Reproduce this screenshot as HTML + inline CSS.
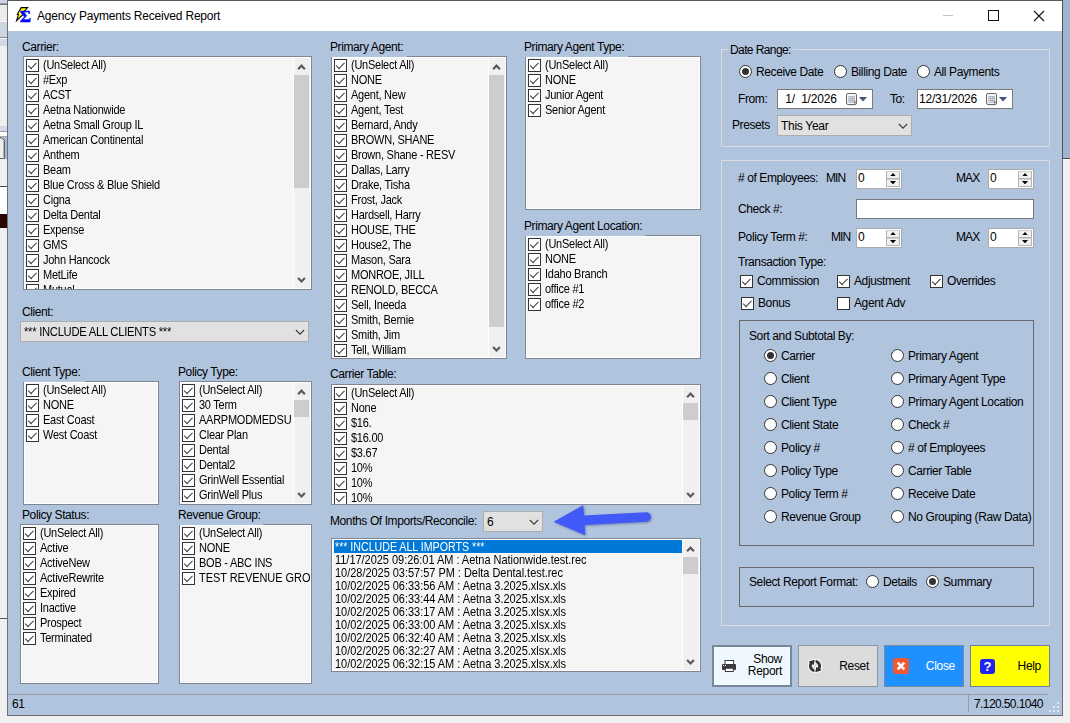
<!DOCTYPE html><html><head><meta charset="utf-8"><title>Agency Payments Received Report</title><style>
*{box-sizing:border-box}
html,body{margin:0;padding:0}
body{width:1070px;height:723px;position:relative;overflow:hidden;background:#f0f0f0;font-family:"Liberation Sans",sans-serif;font-size:12px;color:#000}
.a{position:absolute}
.win{position:absolute;left:7px;top:0;width:1056px;height:716px;background:#b0c4de;border:1px solid #6d7078;border-top-color:#585858}
.tb{position:absolute;left:0;top:0;width:1054px;height:30px;background:#fff}
.ttl{position:absolute;left:29px;top:8px;font-size:12px;line-height:14px;letter-spacing:-.2px;color:#000;white-space:nowrap}
.lb{position:absolute;font-size:12px;line-height:14px;letter-spacing:-.4px;white-space:nowrap;color:#000}
.list{position:absolute;background:#f5f5f5;border:1px solid #7f8794;box-shadow:inset 0 0 0 1px #fff;overflow:hidden}
.it{position:absolute;left:2px;height:15px;font-size:11px;line-height:15px;letter-spacing:-.25px;white-space:nowrap;padding-left:17px}
.t{display:inline-block;transform:scaleY(1.1);transform-origin:0 11.1px}
.t2{display:inline-block;transform:scaleY(1.1);transform-origin:0 10.1px}
.cb{position:absolute;width:13px;height:13px;border:1px solid #333;background:#fff}
.cb.on:before,.cb.on:after{content:"";position:absolute;height:1.4px;background:#3c3c3c;transform-origin:0 50%}
.cb.on:before{left:1.3px;top:4.7px;width:4.5px;transform:rotate(45deg)}
.cb.on:after{left:3.6px;top:7.8px;width:8.4px;transform:rotate(-45deg)}
.sb{position:absolute;width:17px;background:#f0f0f0;border-left:1px solid #fff}
.th{position:absolute;left:0px;width:15px;background:#cdcdcd}
.combo{position:absolute;background:#e1e1e1;border:1px solid #adadad;font-size:12px;line-height:21px;letter-spacing:-.3px;white-space:nowrap;padding-left:3px}
.rd{position:absolute;width:13px;height:13px;border:1px solid #333;border-radius:50%;background:#fff}
.rd.on:after{content:"";position:absolute;left:2px;top:2px;width:7px;height:7px;border-radius:50%;background:#333}
.gb{position:absolute;border:1px solid #dcdcdc}
.gd{position:absolute;border:1px solid #696969}
.num{position:absolute;width:46px;height:20px;background:#fff;border:1px solid #ababab;font-size:12px;line-height:16px;padding-left:1px}
.sp{position:absolute;left:29px;width:14px;height:8px;background:#f0f0f0;border:1px solid #b4b4b4;border-top-color:#d0d0d0}
.btn{position:absolute;top:644px;height:42px;font-size:12px;letter-spacing:-.3px}
</style></head><body>
<div class="a" style="left:0;top:0px;width:7px;height:4px;background:#cbd5e3"></div>
<div class="a" style="left:0;top:3px;width:7px;height:1px;background:#9a9a9a"></div>
<div class="a" style="left:0;top:4px;width:7px;height:1px;background:#777"></div>
<div class="a" style="left:0;top:5px;width:7px;height:16px;background:#ececec"></div>
<div class="a" style="left:0;top:21px;width:7px;height:1px;background:#f8f8f8"></div>
<div class="a" style="left:0;top:22px;width:7px;height:15px;background:#ccd5e3"></div>
<div class="a" style="left:0;top:37px;width:7px;height:1px;background:#888"></div>
<div class="a" style="left:0;top:38px;width:7px;height:1px;background:#fafafa"></div>
<div class="a" style="left:0;top:39px;width:7px;height:7px;background:#cfd9e7"></div>
<div class="a" style="left:0;top:126px;width:7px;height:5px;background:#d0dae8"></div>
<div class="a" style="left:0;top:131px;width:7px;height:1px;background:#a0a0a0"></div>
<div class="a" style="left:0;top:132px;width:7px;height:4px;background:#fff"></div>
<div class="a" style="left:0;top:136px;width:7px;height:1px;background:#b0b0b0"></div>
<div class="a" style="left:0;top:137px;width:7px;height:22px;background:#a5b8d6"></div>
<div class="a" style="left:0;top:186px;width:7px;height:1px;background:#444"></div>
<div class="a" style="left:0;top:187px;width:7px;height:27px;background:#fff"></div>
<div class="a" style="left:0;top:214px;width:7px;height:14px;background:#2b0404"></div>
<div class="a" style="left:0;top:618px;width:7px;height:1px;background:#555"></div>
<svg class="a" style="left:0;top:137px" width="7" height="22" viewBox="0 0 7 22"><path d="M0 0.5 L1.5 0.5 L4.5 3.5 L4.5 21.5 L0 21.5" fill="#f0f0f0" stroke="#666" stroke-width="1"/><path d="M0 1.6 L1.2 1.6 L3.5 4 L3.5 20.5" fill="none" stroke="#b5b5b5" stroke-width="1"/></svg>
<div class="a" style="left:1063px;top:0;width:7px;height:158px;background:#a2b3cf"></div>
<div class="a" style="left:1063px;top:158px;width:7px;height:1px;background:#4a4a4a"></div>
<div class="a" style="left:1063px;top:159px;width:7px;height:1px;background:#fff"></div>
<div class="a" style="left:1062px;top:0;width:1px;height:159px;background:#4a525e;z-index:5"></div>
<div class="win">
<div class="tb"></div>
<svg class="a" style="left:6px;top:3px" width="24" height="22" viewBox="0 0 24 22"><path d="M7.2 3.6 L13.6 3.6 L9.6 8 L9 10.4 L2.6 16.6 L4.4 10.6 L3.4 10.4 L5.4 6.6 Z" fill="#ffff00" stroke="#000" stroke-width="1.1" stroke-linejoin="miter"/><text x="5.7" y="18.1" font-family="Liberation Serif,serif" font-weight="bold" font-size="17" stroke="#0000ff" stroke-width=".5" textLength="11.2" lengthAdjust="spacingAndGlyphs" fill="#0000ff">Σ</text></svg>
<div class="ttl">Agency Payments Received Report</div>
<div class="a" style="left:935px;top:14px;width:10px;height:1px;background:#c4c4c4"></div>
<div class="a" style="left:980px;top:9px;width:11px;height:11px;border:1px solid #111"></div>
<svg class="a" style="left:1025px;top:9px" width="12" height="12" viewBox="0 0 12 12"><path d="M1 1 L11 11 M11 1 L1 11" stroke="#111" stroke-width="1.1" fill="none"/></svg>
<div class="lb" style="left:14px;top:39px;">Carrier:</div>
<div class="list" style="left:15px;top:55px;width:289px;height:234px">
<div class="cb on" style="left:2px;top:2px"></div>
<div class="it" style="top:1px"><span class="t">(UnSelect All)</span></div>
<div class="cb on" style="left:2px;top:17px"></div>
<div class="it" style="top:16px"><span class="t">#Exp</span></div>
<div class="cb on" style="left:2px;top:32px"></div>
<div class="it" style="top:31px"><span class="t">ACST</span></div>
<div class="cb on" style="left:2px;top:47px"></div>
<div class="it" style="top:46px"><span class="t">Aetna Nationwide</span></div>
<div class="cb on" style="left:2px;top:62px"></div>
<div class="it" style="top:61px"><span class="t">Aetna Small Group IL</span></div>
<div class="cb on" style="left:2px;top:77px"></div>
<div class="it" style="top:76px"><span class="t">American Continental</span></div>
<div class="cb on" style="left:2px;top:92px"></div>
<div class="it" style="top:91px"><span class="t">Anthem</span></div>
<div class="cb on" style="left:2px;top:107px"></div>
<div class="it" style="top:106px"><span class="t">Beam</span></div>
<div class="cb on" style="left:2px;top:122px"></div>
<div class="it" style="top:121px"><span class="t">Blue Cross &amp; Blue Shield</span></div>
<div class="cb on" style="left:2px;top:137px"></div>
<div class="it" style="top:136px"><span class="t">Cigna</span></div>
<div class="cb on" style="left:2px;top:152px"></div>
<div class="it" style="top:151px"><span class="t">Delta Dental</span></div>
<div class="cb on" style="left:2px;top:167px"></div>
<div class="it" style="top:166px"><span class="t">Expense</span></div>
<div class="cb on" style="left:2px;top:182px"></div>
<div class="it" style="top:181px"><span class="t">GMS</span></div>
<div class="cb on" style="left:2px;top:197px"></div>
<div class="it" style="top:196px"><span class="t">John Hancock</span></div>
<div class="cb on" style="left:2px;top:212px"></div>
<div class="it" style="top:211px"><span class="t">MetLife</span></div>
<div class="cb on" style="left:2px;top:227px"></div>
<div class="it" style="top:226px"><span class="t">Mutual</span></div>
<div class="sb" style="left:269px;top:1px;height:230px">
<svg class="a" style="left:-1px;top:0" width="17" height="17"><path d="M5.1 11.2 L8.5 7.7 L11.9 11.2" fill="none" stroke="#5a5a5a" stroke-width="2.2"/></svg>
<svg class="a" style="left:-1px;top:213px" width="17" height="17"><path d="M5.1 7 L8.5 10.5 L11.9 7" fill="none" stroke="#5a5a5a" stroke-width="2.2"/></svg>
<div class="th" style="top:17px;height:113px"></div>
</div>
</div>
<div class="lb" style="left:14px;top:304px;">Client:</div>
<div class="combo" style="left:12px;top:320px;width:289px;height:21px"><span style="display:inline-block;transform:scaleX(.937);transform-origin:0 50%">*** INCLUDE ALL CLIENTS ***</span><svg class="a" style="right:2px;top:6px" width="12" height="8"><path d="M1.9 2 L6 6.1 L10.1 2" fill="none" stroke="#3c3c3c" stroke-width="1.15"/></svg></div>
<div class="lb" style="left:14px;top:364px;">Client Type:</div>
<div class="list" style="left:15px;top:380px;width:136px;height:124px">
<div class="cb on" style="left:2px;top:2px"></div>
<div class="it" style="top:1px"><span class="t">(UnSelect All)</span></div>
<div class="cb on" style="left:2px;top:17px"></div>
<div class="it" style="top:16px"><span class="t">NONE</span></div>
<div class="cb on" style="left:2px;top:32px"></div>
<div class="it" style="top:31px"><span class="t">East Coast</span></div>
<div class="cb on" style="left:2px;top:47px"></div>
<div class="it" style="top:46px"><span class="t">West Coast</span></div>
</div>
<div class="lb" style="left:170px;top:364px;">Policy Type:</div>
<div class="list" style="left:171px;top:380px;width:133px;height:124px">
<div class="cb on" style="left:2px;top:2px"></div>
<div class="it" style="top:1px"><span class="t">(UnSelect All)</span></div>
<div class="cb on" style="left:2px;top:17px"></div>
<div class="it" style="top:16px"><span class="t">30 Term</span></div>
<div class="cb on" style="left:2px;top:32px"></div>
<div class="it" style="top:31px"><span class="t">AARPMODMEDSU</span></div>
<div class="cb on" style="left:2px;top:47px"></div>
<div class="it" style="top:46px"><span class="t">Clear Plan</span></div>
<div class="cb on" style="left:2px;top:62px"></div>
<div class="it" style="top:61px"><span class="t">Dental</span></div>
<div class="cb on" style="left:2px;top:77px"></div>
<div class="it" style="top:76px"><span class="t">Dental2</span></div>
<div class="cb on" style="left:2px;top:92px"></div>
<div class="it" style="top:91px"><span class="t">GrinWell Essential</span></div>
<div class="cb on" style="left:2px;top:107px"></div>
<div class="it" style="top:106px"><span class="t">GrinWell Plus</span></div>
<div class="sb" style="left:113px;top:1px;height:120px">
<svg class="a" style="left:-1px;top:0" width="17" height="17"><path d="M5.1 11.2 L8.5 7.7 L11.9 11.2" fill="none" stroke="#5a5a5a" stroke-width="2.2"/></svg>
<svg class="a" style="left:-1px;top:103px" width="17" height="17"><path d="M5.1 7 L8.5 10.5 L11.9 7" fill="none" stroke="#5a5a5a" stroke-width="2.2"/></svg>
<div class="th" style="top:17px;height:17px"></div>
</div>
</div>
<div class="lb" style="left:14px;top:507px;">Policy Status:</div>
<div class="list" style="left:12px;top:523px;width:139px;height:160px">
<div class="cb on" style="left:2px;top:2px"></div>
<div class="it" style="top:1px"><span class="t">(UnSelect All)</span></div>
<div class="cb on" style="left:2px;top:17px"></div>
<div class="it" style="top:16px"><span class="t">Active</span></div>
<div class="cb on" style="left:2px;top:32px"></div>
<div class="it" style="top:31px"><span class="t">ActiveNew</span></div>
<div class="cb on" style="left:2px;top:47px"></div>
<div class="it" style="top:46px"><span class="t">ActiveRewrite</span></div>
<div class="cb on" style="left:2px;top:62px"></div>
<div class="it" style="top:61px"><span class="t">Expired</span></div>
<div class="cb on" style="left:2px;top:77px"></div>
<div class="it" style="top:76px"><span class="t">Inactive</span></div>
<div class="cb on" style="left:2px;top:92px"></div>
<div class="it" style="top:91px"><span class="t">Prospect</span></div>
<div class="cb on" style="left:2px;top:107px"></div>
<div class="it" style="top:106px"><span class="t">Terminated</span></div>
</div>
<div class="lb" style="left:170px;top:507px;">Revenue Group:</div>
<div class="list" style="left:171px;top:523px;width:133px;height:160px">
<div class="cb on" style="left:2px;top:2px"></div>
<div class="it" style="top:1px"><span class="t">(UnSelect All)</span></div>
<div class="cb on" style="left:2px;top:17px"></div>
<div class="it" style="top:16px"><span class="t">NONE</span></div>
<div class="cb on" style="left:2px;top:32px"></div>
<div class="it" style="top:31px"><span class="t">BOB - ABC INS</span></div>
<div class="cb on" style="left:2px;top:47px"></div>
<div class="it" style="top:46px;letter-spacing:-.05px"><span class="t">TEST REVENUE GROUP</span></div>
</div>
<div class="lb" style="left:322px;top:39px;">Primary Agent:</div>
<div class="list" style="left:323px;top:55px;width:176px;height:303px">
<div class="cb on" style="left:2px;top:2px"></div>
<div class="it" style="top:1px"><span class="t">(UnSelect All)</span></div>
<div class="cb on" style="left:2px;top:17px"></div>
<div class="it" style="top:16px"><span class="t">NONE</span></div>
<div class="cb on" style="left:2px;top:32px"></div>
<div class="it" style="top:31px"><span class="t">Agent, New</span></div>
<div class="cb on" style="left:2px;top:47px"></div>
<div class="it" style="top:46px"><span class="t">Agent, Test</span></div>
<div class="cb on" style="left:2px;top:62px"></div>
<div class="it" style="top:61px"><span class="t">Bernard, Andy</span></div>
<div class="cb on" style="left:2px;top:77px"></div>
<div class="it" style="top:76px"><span class="t">BROWN, SHANE</span></div>
<div class="cb on" style="left:2px;top:92px"></div>
<div class="it" style="top:91px"><span class="t">Brown, Shane - RESV</span></div>
<div class="cb on" style="left:2px;top:107px"></div>
<div class="it" style="top:106px"><span class="t">Dallas, Larry</span></div>
<div class="cb on" style="left:2px;top:122px"></div>
<div class="it" style="top:121px"><span class="t">Drake, Tisha</span></div>
<div class="cb on" style="left:2px;top:137px"></div>
<div class="it" style="top:136px"><span class="t">Frost, Jack</span></div>
<div class="cb on" style="left:2px;top:152px"></div>
<div class="it" style="top:151px"><span class="t">Hardsell, Harry</span></div>
<div class="cb on" style="left:2px;top:167px"></div>
<div class="it" style="top:166px"><span class="t">HOUSE, THE</span></div>
<div class="cb on" style="left:2px;top:182px"></div>
<div class="it" style="top:181px"><span class="t">House2, The</span></div>
<div class="cb on" style="left:2px;top:197px"></div>
<div class="it" style="top:196px"><span class="t">Mason, Sara</span></div>
<div class="cb on" style="left:2px;top:212px"></div>
<div class="it" style="top:211px"><span class="t">MONROE, JILL</span></div>
<div class="cb on" style="left:2px;top:227px"></div>
<div class="it" style="top:226px"><span class="t">RENOLD, BECCA</span></div>
<div class="cb on" style="left:2px;top:242px"></div>
<div class="it" style="top:241px"><span class="t">Sell, Ineeda</span></div>
<div class="cb on" style="left:2px;top:257px"></div>
<div class="it" style="top:256px"><span class="t">Smith, Bernie</span></div>
<div class="cb on" style="left:2px;top:272px"></div>
<div class="it" style="top:271px"><span class="t">Smith, Jim</span></div>
<div class="cb on" style="left:2px;top:287px"></div>
<div class="it" style="top:286px"><span class="t">Tell, William</span></div>
<div class="sb" style="left:156px;top:1px;height:299px">
<svg class="a" style="left:-1px;top:0" width="17" height="17"><path d="M5.1 11.2 L8.5 7.7 L11.9 11.2" fill="none" stroke="#5a5a5a" stroke-width="2.2"/></svg>
<svg class="a" style="left:-1px;top:282px" width="17" height="17"><path d="M5.1 7 L8.5 10.5 L11.9 7" fill="none" stroke="#5a5a5a" stroke-width="2.2"/></svg>
<div class="th" style="top:17px;height:252px"></div>
</div>
</div>
<div class="lb" style="left:516px;top:39px;">Primary Agent Type:</div>
<div class="list" style="left:517px;top:55px;width:176px;height:154px">
<div class="cb on" style="left:2px;top:2px"></div>
<div class="it" style="top:1px"><span class="t">(UnSelect All)</span></div>
<div class="cb on" style="left:2px;top:17px"></div>
<div class="it" style="top:16px"><span class="t">NONE</span></div>
<div class="cb on" style="left:2px;top:32px"></div>
<div class="it" style="top:31px"><span class="t">Junior Agent</span></div>
<div class="cb on" style="left:2px;top:47px"></div>
<div class="it" style="top:46px"><span class="t">Senior Agent</span></div>
</div>
<div class="lb" style="left:516px;top:218px;">Primary Agent Location:</div>
<div class="list" style="left:517px;top:234px;width:176px;height:124px">
<div class="cb on" style="left:2px;top:2px"></div>
<div class="it" style="top:1px"><span class="t">(UnSelect All)</span></div>
<div class="cb on" style="left:2px;top:17px"></div>
<div class="it" style="top:16px"><span class="t">NONE</span></div>
<div class="cb on" style="left:2px;top:32px"></div>
<div class="it" style="top:31px"><span class="t">Idaho Branch</span></div>
<div class="cb on" style="left:2px;top:47px"></div>
<div class="it" style="top:46px"><span class="t">office #1</span></div>
<div class="cb on" style="left:2px;top:62px"></div>
<div class="it" style="top:61px"><span class="t">office #2</span></div>
</div>
<div class="lb" style="left:322px;top:366px;">Carrier Table:</div>
<div class="list" style="left:323px;top:383px;width:370px;height:121px">
<div class="cb on" style="left:2px;top:2px"></div>
<div class="it" style="top:1px"><span class="t">(UnSelect All)</span></div>
<div class="cb on" style="left:2px;top:17px"></div>
<div class="it" style="top:16px"><span class="t">None</span></div>
<div class="cb on" style="left:2px;top:32px"></div>
<div class="it" style="top:31px"><span class="t">$16.</span></div>
<div class="cb on" style="left:2px;top:47px"></div>
<div class="it" style="top:46px"><span class="t">$16.00</span></div>
<div class="cb on" style="left:2px;top:62px"></div>
<div class="it" style="top:61px"><span class="t">$3.67</span></div>
<div class="cb on" style="left:2px;top:77px"></div>
<div class="it" style="top:76px"><span class="t">10%</span></div>
<div class="cb on" style="left:2px;top:92px"></div>
<div class="it" style="top:91px"><span class="t">10%</span></div>
<div class="cb on" style="left:2px;top:107px"></div>
<div class="it" style="top:106px"><span class="t">10%</span></div>
<div class="sb" style="left:350px;top:1px;height:117px">
<svg class="a" style="left:-1px;top:0" width="17" height="17"><path d="M5.1 11.2 L8.5 7.7 L11.9 11.2" fill="none" stroke="#5a5a5a" stroke-width="2.2"/></svg>
<svg class="a" style="left:-1px;top:100px" width="17" height="17"><path d="M5.1 7 L8.5 10.5 L11.9 7" fill="none" stroke="#5a5a5a" stroke-width="2.2"/></svg>
<div class="th" style="top:17px;height:17px"></div>
</div>
</div>
<div class="lb" style="left:322px;top:513px;">Months Of Imports/Reconcile:</div>
<div class="combo" style="left:475px;top:510px;width:60px;height:21px">6<svg class="a" style="right:2px;top:6px" width="12" height="8"><path d="M1.9 2 L6 6.1 L10.1 2" fill="none" stroke="#3c3c3c" stroke-width="1.15"/></svg></div>
<svg class="a" style="left:542px;top:499px;overflow:visible;filter:drop-shadow(1px 1.5px 1.2px rgba(42,58,112,.45))" width="106" height="40" viewBox="0 0 106 40"><path d="M34 20.3 L96.2 17" stroke="#4159f7" stroke-width="9.4" stroke-linecap="round" fill="none"/><path d="M4.6 21.7 L32.8 5.9 L34.7 34.5 Z" fill="#4159f7" stroke="#4159f7" stroke-width="1" stroke-linejoin="round"/></svg>
<div class="list" style="left:323px;top:537px;width:370px;height:134px">
<div class="it" style="top:1px;padding-left:1px;left:2px;height:13px;line-height:15px;background:#0078d7;color:#fff;width:348px;letter-spacing:-.03px;"><span style="display:inline-block;transform:scale(.971,1.1);transform-origin:0 11.1px">*** INCLUDE ALL IMPORTS ***</span></div>
<div class="it" style="top:15px;padding-left:1px;left:2px;height:13px;line-height:13px;letter-spacing:-.03px;"><span class="t2">11/17/2025 09:26:01 AM : Aetna Nationwide.test.rec</span></div>
<div class="it" style="top:28px;padding-left:1px;left:2px;height:13px;line-height:13px;letter-spacing:-.03px;"><span class="t2">10/28/2025 03:57:57 PM : Delta Dental.test.rec</span></div>
<div class="it" style="top:41px;padding-left:1px;left:2px;height:13px;line-height:13px;letter-spacing:-.03px;"><span class="t2">10/02/2025 06:33:56 AM : Aetna 3.2025.xlsx.xls</span></div>
<div class="it" style="top:54px;padding-left:1px;left:2px;height:13px;line-height:13px;letter-spacing:-.03px;"><span class="t2">10/02/2025 06:33:44 AM : Aetna 3.2025.xlsx.xls</span></div>
<div class="it" style="top:67px;padding-left:1px;left:2px;height:13px;line-height:13px;letter-spacing:-.03px;"><span class="t2">10/02/2025 06:33:17 AM : Aetna 3.2025.xlsx.xls</span></div>
<div class="it" style="top:80px;padding-left:1px;left:2px;height:13px;line-height:13px;letter-spacing:-.03px;"><span class="t2">10/02/2025 06:33:00 AM : Aetna 3.2025.xlsx.xls</span></div>
<div class="it" style="top:93px;padding-left:1px;left:2px;height:13px;line-height:13px;letter-spacing:-.03px;"><span class="t2">10/02/2025 06:32:40 AM : Aetna 3.2025.xlsx.xls</span></div>
<div class="it" style="top:106px;padding-left:1px;left:2px;height:13px;line-height:13px;letter-spacing:-.03px;"><span class="t2">10/02/2025 06:32:27 AM : Aetna 3.2025.xlsx.xls</span></div>
<div class="it" style="top:119px;padding-left:1px;left:2px;height:13px;line-height:13px;letter-spacing:-.03px;"><span class="t2">10/02/2025 06:32:15 AM : Aetna 3.2025.xlsx.xls</span></div>
<div class="sb" style="left:350px;top:1px;height:130px">
<svg class="a" style="left:-1px;top:0" width="17" height="17"><path d="M5.1 11.2 L8.5 7.7 L11.9 11.2" fill="none" stroke="#5a5a5a" stroke-width="2.2"/></svg>
<svg class="a" style="left:-1px;top:113px" width="17" height="17"><path d="M5.1 7 L8.5 10.5 L11.9 7" fill="none" stroke="#5a5a5a" stroke-width="2.2"/></svg>
<div class="th" style="top:17px;height:17px"></div>
</div>
</div>
<div class="a" style="left:15px;top:380px;width:62px;height:1px;background:#b0c4de"></div>
<div class="a" style="left:171px;top:523px;width:84px;height:1px;background:#b0c4de"></div>
<div class="a" style="left:323px;top:55px;width:76px;height:1px;background:#b0c4de"></div>
<div class="a" style="left:517px;top:55px;width:103px;height:1px;background:#b0c4de"></div>
<div class="a" style="left:517px;top:234px;width:120px;height:1px;background:#b0c4de"></div>
<div class="gb" style="left:713px;top:48px;width:329px;height:98px"></div>
<div class="lb" style="left:720px;top:42px;background:#b0c4de;padding:0 2px;letter-spacing:-.6px">Date Range:</div>
<div class="rd on" style="left:731px;top:64px"></div>
<div class="lb" style="left:748px;top:64px;">Receive Date</div>
<div class="rd" style="left:826px;top:64px"></div>
<div class="lb" style="left:843px;top:64px;">Billing Date</div>
<div class="rd" style="left:909px;top:64px"></div>
<div class="lb" style="left:926px;top:64px;">All Payments</div>
<div class="lb" style="left:730px;top:91px;">From:</div>
<div class="a" style="left:769px;top:88px;width:96px;height:20px;background:#fff;border:1px solid #7a7a7a;font-size:12px;line-height:18px;letter-spacing:-.2px;white-space:pre;padding-left:1px">  1/  1/2026<svg class="a" style="left:68px;top:3px;overflow:visible" width="11" height="12" viewBox="0 0 11 12"><rect x="1" y="1.5" width="10" height="11" rx="2" fill="#8a93a8" opacity=".25"/><rect x=".5" y=".5" width="10" height="11" rx="1.6" fill="#f3f6fc" stroke="#6e6360"/><rect x="2.4" y="3.1" width="6.6" height="6.6" fill="#aeb1ba"/><rect x="3.3" y="4" width=".9" height=".9" fill="#fff"/><rect x="3.3" y="6" width=".9" height=".9" fill="#fff"/><rect x="3.3" y="8" width=".9" height=".9" fill="#fff"/><rect x="5.3" y="4" width=".9" height=".9" fill="#fff"/><rect x="5.3" y="6" width=".9" height=".9" fill="#fff"/><rect x="5.3" y="8" width=".9" height=".9" fill="#fff"/><rect x="7.3" y="4" width=".9" height=".9" fill="#fff"/><rect x="7.3" y="6" width=".9" height=".9" fill="#fff"/><rect x="7.3" y="8" width=".9" height=".9" fill="#fff"/><path d="M8 11 L10.5 8.5 L8 8.5Z" fill="#6e6360"/></svg><svg class="a" style="left:81px;top:7px" width="8" height="5" viewBox="0 0 8 5"><path d="M0 0 L8 0 L4 4.5Z" fill="#44527a"/></svg></div>
<div class="lb" style="left:882px;top:91px;">To:</div>
<div class="a" style="left:909px;top:88px;width:96px;height:20px;background:#fff;border:1px solid #7a7a7a;font-size:12px;line-height:18px;letter-spacing:-.2px;white-space:pre;padding-left:1px">12/31/2026<svg class="a" style="left:68px;top:3px;overflow:visible" width="11" height="12" viewBox="0 0 11 12"><rect x="1" y="1.5" width="10" height="11" rx="2" fill="#8a93a8" opacity=".25"/><rect x=".5" y=".5" width="10" height="11" rx="1.6" fill="#f3f6fc" stroke="#6e6360"/><rect x="2.4" y="3.1" width="6.6" height="6.6" fill="#aeb1ba"/><rect x="3.3" y="4" width=".9" height=".9" fill="#fff"/><rect x="3.3" y="6" width=".9" height=".9" fill="#fff"/><rect x="3.3" y="8" width=".9" height=".9" fill="#fff"/><rect x="5.3" y="4" width=".9" height=".9" fill="#fff"/><rect x="5.3" y="6" width=".9" height=".9" fill="#fff"/><rect x="5.3" y="8" width=".9" height=".9" fill="#fff"/><rect x="7.3" y="4" width=".9" height=".9" fill="#fff"/><rect x="7.3" y="6" width=".9" height=".9" fill="#fff"/><rect x="7.3" y="8" width=".9" height=".9" fill="#fff"/><path d="M8 11 L10.5 8.5 L8 8.5Z" fill="#6e6360"/></svg><svg class="a" style="left:81px;top:7px" width="8" height="5" viewBox="0 0 8 5"><path d="M0 0 L8 0 L4 4.5Z" fill="#44527a"/></svg></div>
<div class="lb" style="left:724px;top:117px;">Presets</div>
<div class="combo" style="left:769px;top:114px;width:135px;height:21px">This Year<svg class="a" style="right:2px;top:6px" width="12" height="8"><path d="M1.9 2 L6 6.1 L10.1 2" fill="none" stroke="#3c3c3c" stroke-width="1.15"/></svg></div>
<div class="gb" style="left:713px;top:159px;width:329px;height:466px"></div>
<div class="lb" style="left:730px;top:170px;"># of Employees:</div>
<div class="lb" style="left:818px;top:170px;letter-spacing:-.9px">MIN</div>
<div class="num" style="left:848px;top:168px">0<div class="sp" style="top:1px"><svg class="a" style="left:3px;top:.8px" width="6" height="3.4" viewBox="0 0 6 3.4"><path d="M0 3.4 L3 0 L6 3.4Z" fill="#000"/></svg></div><div class="sp" style="top:9px"><svg class="a" style="left:3px;top:.8px" width="6" height="3.4" viewBox="0 0 6 3.4"><path d="M0 0 L3 3.4 L6 0Z" fill="#000"/></svg></div></div>
<div class="lb" style="left:948px;top:170px;letter-spacing:-.9px">MAX</div>
<div class="num" style="left:980px;top:168px">0<div class="sp" style="top:1px"><svg class="a" style="left:3px;top:.8px" width="6" height="3.4" viewBox="0 0 6 3.4"><path d="M0 3.4 L3 0 L6 3.4Z" fill="#000"/></svg></div><div class="sp" style="top:9px"><svg class="a" style="left:3px;top:.8px" width="6" height="3.4" viewBox="0 0 6 3.4"><path d="M0 0 L3 3.4 L6 0Z" fill="#000"/></svg></div></div>
<div class="lb" style="left:730px;top:201px;">Check #:</div>
<div class="a" style="left:848px;top:198px;width:178px;height:20px;background:#fff;border:1px solid #7a7a7a"></div>
<div class="lb" style="left:730px;top:229px;">Policy Term #:</div>
<div class="lb" style="left:823px;top:229px;letter-spacing:-.9px">MIN</div>
<div class="num" style="left:848px;top:227px">0<div class="sp" style="top:1px"><svg class="a" style="left:3px;top:.8px" width="6" height="3.4" viewBox="0 0 6 3.4"><path d="M0 3.4 L3 0 L6 3.4Z" fill="#000"/></svg></div><div class="sp" style="top:9px"><svg class="a" style="left:3px;top:.8px" width="6" height="3.4" viewBox="0 0 6 3.4"><path d="M0 0 L3 3.4 L6 0Z" fill="#000"/></svg></div></div>
<div class="lb" style="left:948px;top:229px;letter-spacing:-.9px">MAX</div>
<div class="num" style="left:980px;top:227px">0<div class="sp" style="top:1px"><svg class="a" style="left:3px;top:.8px" width="6" height="3.4" viewBox="0 0 6 3.4"><path d="M0 3.4 L3 0 L6 3.4Z" fill="#000"/></svg></div><div class="sp" style="top:9px"><svg class="a" style="left:3px;top:.8px" width="6" height="3.4" viewBox="0 0 6 3.4"><path d="M0 0 L3 3.4 L6 0Z" fill="#000"/></svg></div></div>
<div class="lb" style="left:730px;top:254px;">Transaction Type:</div>
<div class="cb on" style="left:732px;top:274px"></div>
<div class="lb" style="left:749px;top:273px;">Commission</div>
<div class="cb on" style="left:829px;top:274px"></div>
<div class="lb" style="left:846px;top:273px;">Adjustment</div>
<div class="cb on" style="left:922px;top:274px"></div>
<div class="lb" style="left:939px;top:273px;">Overrides</div>
<div class="cb on" style="left:733px;top:296px"></div>
<div class="lb" style="left:750px;top:295px;">Bonus</div>
<div class="cb" style="left:829px;top:296px"></div>
<div class="lb" style="left:846px;top:295px;">Agent Adv</div>
<div class="gd" style="left:731px;top:319px;width:295px;height:226px"></div>
<div class="lb" style="left:741px;top:328px;">Sort and Subtotal By:</div>
<div class="rd on" style="left:756px;top:348px"></div>
<div class="lb" style="left:773px;top:348px;">Carrier</div>
<div class="rd" style="left:883px;top:348px"></div>
<div class="lb" style="left:900px;top:348px;">Primary Agent</div>
<div class="rd" style="left:756px;top:371px"></div>
<div class="lb" style="left:773px;top:371px;">Client</div>
<div class="rd" style="left:883px;top:371px"></div>
<div class="lb" style="left:900px;top:371px;">Primary Agent Type</div>
<div class="rd" style="left:756px;top:394px"></div>
<div class="lb" style="left:773px;top:394px;">Client Type</div>
<div class="rd" style="left:883px;top:394px"></div>
<div class="lb" style="left:900px;top:394px;">Primary Agent Location</div>
<div class="rd" style="left:756px;top:417px"></div>
<div class="lb" style="left:773px;top:417px;">Client State</div>
<div class="rd" style="left:883px;top:417px"></div>
<div class="lb" style="left:900px;top:417px;">Check #</div>
<div class="rd" style="left:756px;top:440px"></div>
<div class="lb" style="left:773px;top:440px;">Policy #</div>
<div class="rd" style="left:883px;top:440px"></div>
<div class="lb" style="left:900px;top:440px;"># of Employees</div>
<div class="rd" style="left:756px;top:463px"></div>
<div class="lb" style="left:773px;top:463px;">Policy Type</div>
<div class="rd" style="left:883px;top:463px"></div>
<div class="lb" style="left:900px;top:463px;">Carrier Table</div>
<div class="rd" style="left:756px;top:486px"></div>
<div class="lb" style="left:773px;top:486px;">Policy Term #</div>
<div class="rd" style="left:883px;top:486px"></div>
<div class="lb" style="left:900px;top:486px;">Receive Date</div>
<div class="rd" style="left:756px;top:509px"></div>
<div class="lb" style="left:773px;top:509px;">Revenue Group</div>
<div class="rd" style="left:883px;top:509px"></div>
<div class="lb" style="left:900px;top:509px;">No Grouping (Raw Data)</div>
<div class="gd" style="left:731px;top:566px;width:295px;height:40px"></div>
<div class="lb" style="left:741px;top:574px;">Select Report Format:</div>
<div class="rd" style="left:858px;top:574px"></div>
<div class="lb" style="left:875px;top:574px;">Details</div>
<div class="rd on" style="left:918px;top:574px"></div>
<div class="lb" style="left:935px;top:574px;">Summary</div>
<div class="btn" style="left:704px;width:80px;background:#f0f8ff;border:2px solid #778899;color:#000"><svg class="a" style="left:8px;top:13px" width="14" height="12" viewBox="0 0 14 12"><rect x="3" y=".5" width="8.6" height="4" fill="#fff" stroke="#3a3a3a" stroke-width="1"/><rect x="0" y="4" width="14" height="6" rx=".8" fill="#3a3a3a"/><rect x="3.3" y="8.2" width="8" height="3.3" fill="#fff" stroke="#3a3a3a" stroke-width="1"/><rect x="1" y="5" width="1" height="1" fill="#fff"/><rect x="3" y="5" width="1" height="1" fill="#fff"/></svg><div class="a" style="right:8px;top:7px;text-align:right;line-height:11.5px">Show<br>Report</div></div>
<div class="btn" style="left:790px;width:80px;background:#dcdcdc;border:1px solid #8f96a3;color:#000"><svg class="a" style="left:9px;top:13px" width="14" height="14" viewBox="0 0 14 14"><g stroke="#fff" stroke-width="1.8" stroke-linejoin="round" opacity=".85"><path d="M6.4 13 A6 6 0 0 1 1.7 4.2 L0.8 2.4 L6.7 0.8 L5.7 6.2 L4.7 4.9 A3.2 3.2 0 0 0 6.4 10.2Z"/><path d="M6.4 13 A6 6 0 0 1 1.7 4.2 L0.8 2.4 L6.7 0.8 L5.7 6.2 L4.7 4.9 A3.2 3.2 0 0 0 6.4 10.2Z" transform="rotate(180 7 7)"/></g><g fill="#333"><path d="M6.4 13 A6 6 0 0 1 1.7 4.2 L0.8 2.4 L6.7 0.8 L5.7 6.2 L4.7 4.9 A3.2 3.2 0 0 0 6.4 10.2Z"/><path d="M6.4 13 A6 6 0 0 1 1.7 4.2 L0.8 2.4 L6.7 0.8 L5.7 6.2 L4.7 4.9 A3.2 3.2 0 0 0 6.4 10.2Z" transform="rotate(180 7 7)"/></g></svg><div class="a" style="right:8px;top:13px">Reset</div></div>
<div class="btn" style="left:876px;width:80px;background:#1e90ff;border:1px solid #7a8a9a;color:#fff"><svg class="a" style="left:8px;top:12px" width="16" height="16" viewBox="0 0 16 16"><rect width="16" height="16" rx="3" fill="#ef5a33"/><path d="M4.7 4.7 L11.3 11.3 M11.3 4.7 L4.7 11.3" stroke="#fff" stroke-width="2.6"/></svg><div class="a" style="right:8px;top:13px">Close</div></div>
<div class="btn" style="left:962px;width:80px;background:#ffff00;border:1px solid #6f7f9f;color:#000"><svg class="a" style="left:9px;top:13px" width="15" height="15" viewBox="0 0 15 15"><rect width="15" height="15" rx="3" fill="#2222f0"/><text x="7.3" y="12" text-anchor="middle" font-family="Liberation Sans,sans-serif" font-weight="bold" font-size="13" fill="#fff">?</text></svg><div class="a" style="right:8px;top:13px">Help</div></div>
<div class="a" style="left:0;top:693px;width:1040px;height:1px;background:#969ca8"></div>
<div class="lb" style="left:4px;top:696px;">61</div>
<div class="a" style="left:960px;top:694px;width:1px;height:17px;background:#969ca8"></div>
<div class="lb" style="left:966px;top:696px;letter-spacing:-.6px">7.120.50.1040</div>
<svg class="a" style="left:1041px;top:701px" width="11" height="11"><rect x="8" y="0" width="2" height="2" fill="#dfe7f2"/><rect x="4" y="4" width="2" height="2" fill="#dfe7f2"/><rect x="8" y="4" width="2" height="2" fill="#dfe7f2"/><rect x="0" y="8" width="2" height="2" fill="#dfe7f2"/><rect x="4" y="8" width="2" height="2" fill="#dfe7f2"/><rect x="8" y="8" width="2" height="2" fill="#dfe7f2"/></svg>
</div>
</body></html>
